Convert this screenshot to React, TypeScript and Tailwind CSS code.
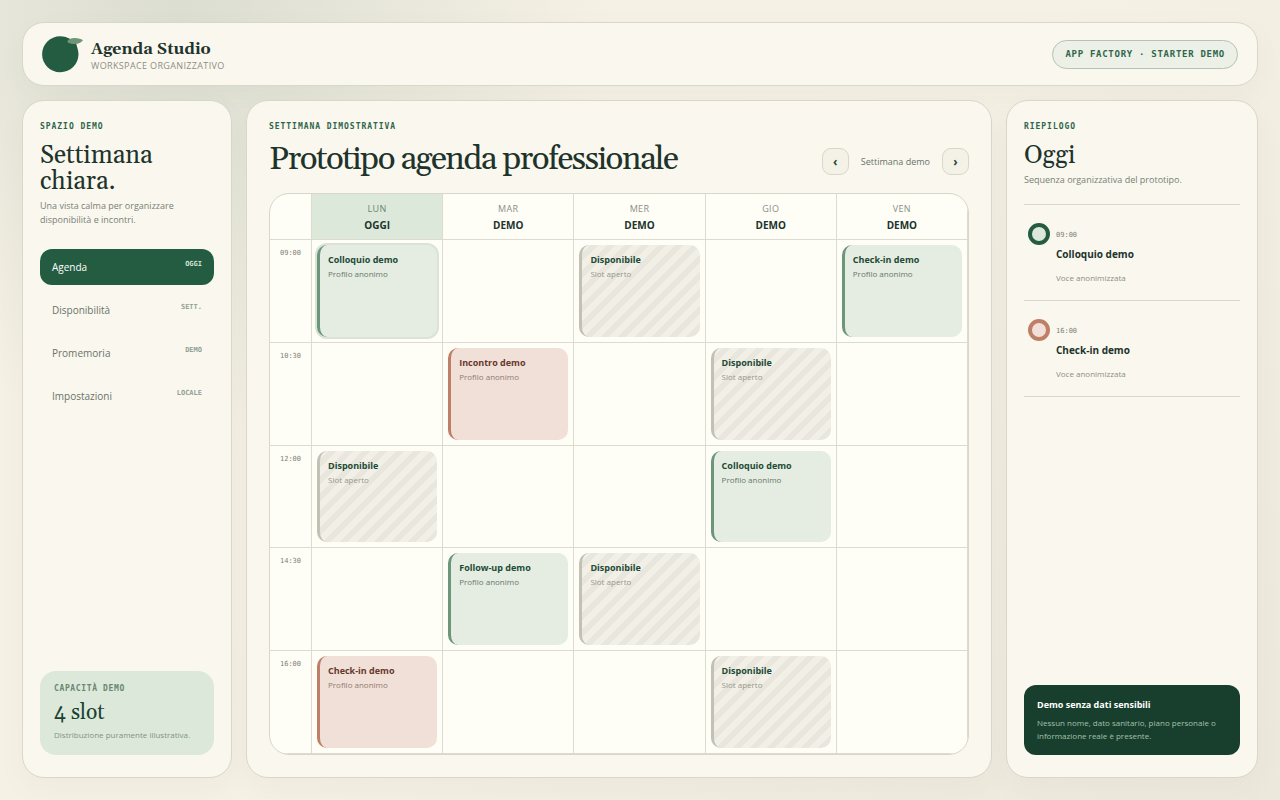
import { useState } from "react";
import clsx from "clsx";

type Tone = "green" | "clay" | "open";

interface Slot {
  id: string;
  day: number;
  time: string;
  title: string;
  detail: string;
  tone: Tone;
}

const days = [
  { name: "Lun", label: "OGGI", today: true },
  { name: "Mar", label: "DEMO", today: false },
  { name: "Mer", label: "DEMO", today: false },
  { name: "Gio", label: "DEMO", today: false },
  { name: "Ven", label: "DEMO", today: false },
];

const times = ["09:00", "10:30", "12:00", "14:30", "16:00"];

const slots: Slot[] = [
  { id: "s1", day: 0, time: "09:00", title: "Colloquio demo", detail: "Profilo anonimo", tone: "green" },
  { id: "s2", day: 2, time: "09:00", title: "Disponibile", detail: "Slot aperto", tone: "open" },
  { id: "s3", day: 4, time: "09:00", title: "Check-in demo", detail: "Profilo anonimo", tone: "green" },
  { id: "s4", day: 1, time: "10:30", title: "Incontro demo", detail: "Profilo anonimo", tone: "clay" },
  { id: "s5", day: 3, time: "10:30", title: "Disponibile", detail: "Slot aperto", tone: "open" },
  { id: "s6", day: 0, time: "12:00", title: "Disponibile", detail: "Slot aperto", tone: "open" },
  { id: "s7", day: 3, time: "12:00", title: "Colloquio demo", detail: "Profilo anonimo", tone: "green" },
  { id: "s8", day: 1, time: "14:30", title: "Follow-up demo", detail: "Profilo anonimo", tone: "green" },
  { id: "s9", day: 2, time: "14:30", title: "Disponibile", detail: "Slot aperto", tone: "open" },
  { id: "s10", day: 0, time: "16:00", title: "Check-in demo", detail: "Profilo anonimo", tone: "clay" },
  { id: "s11", day: 3, time: "16:00", title: "Disponibile", detail: "Slot aperto", tone: "open" },
];

const navItems = [
  { label: "Agenda", badge: "OGGI" },
  { label: "Disponibilità", badge: "SETT." },
  { label: "Promemoria", badge: "DEMO" },
  { label: "Impostazioni", badge: "LOCALE" },
];

const todayItems = [
  { time: "09:00", title: "Colloquio demo", ring: "border-[#245c42] bg-[#dce8da]" },
  { time: "16:00", title: "Check-in demo", ring: "border-[#bf7f66] bg-[#f1e0d9]" },
];

const slotTones: Record<Tone, string> = {
  green: "border-[#6b9679] bg-[#e5ece1] text-[#1c4a36]",
  clay: "border-[#bf7f66] bg-[#f0e0d8] text-[#68392b]",
  open: "border-[#c3c1b4] bg-[repeating-linear-gradient(135deg,#f2efe6_0_6px,#e9e6dd_6px_12px)] text-[#1c4a36]",
};

const detailTones: Record<Tone, string> = {
  green: "text-[#66796b]",
  clay: "text-[#927a70]",
  open: "text-[#96978d]",
};

const serif = "font-['Gelasio',Georgia,serif]";
const mono = "font-['DejaVu_Sans_Mono',monospace]";
const panel = "rounded-[22px] border border-[#d9d7c9] bg-[#faf7ee] shadow-[0_10px_30px_rgba(60,70,50,0.04)]";
const arrow =
  "size-[27px] rounded-[9px] border border-[#d9d7c9] bg-[#f4f1e6] text-[12px] leading-[20px] font-bold text-[#1c4a36]";

const Eyebrow = ({ children }: { children: string }) => (
  <p className={clsx(mono, "text-[8px] leading-[8px] font-bold tracking-[0.12em] text-[#2f664b]")}>{children}</p>
);

const Logo = () => (
  <svg viewBox="0 0 42 37" className="h-[37px] w-[42px] shrink-0" aria-hidden="true">
    <path
      d="M18.2 0.2C22 0.2 25.5 1.2 28.4 3.1L34 6C34.2 9 36.7 14.4 36.5 18.6C36.2 28.6 28.6 36.3 18.2 36.3C8.2 36.3 0.1 28.3 0.1 18.3C0.1 8.3 8.2 0.2 18.2 0.2Z"
      fill="#245c42"
    />
    <path
      d="M25.3 5.9C26.2 3.2 29 2 33 2.1C36.5 2.2 39 3 41 4.2C39.3 6.6 36.5 7.9 32.5 7.9C29.5 7.9 27 7.3 25.3 5.9Z"
      fill="#6f9579"
    />
  </svg>
);

const SlotCard = ({ slot, selected, onSelect }: { slot: Slot; selected: boolean; onSelect: () => void }) => (
  <button
    type="button"
    onClick={onSelect}
    className={clsx(
      "flex w-full flex-col items-start justify-start rounded-[10px] border-l-[3px] px-2 py-2 text-left",
      slotTones[slot.tone],
      selected && "ring-2 ring-[#dbe3d9]"
    )}
  >
    <strong className="text-[9px] leading-[13px] font-bold">{slot.title}</strong>
    <span className={clsx("mt-[2px] text-[8px] leading-[12px]", detailTones[slot.tone])}>{slot.detail}</span>
  </button>
);

const App = () => {
  const [active, setActive] = useState("Agenda");
  const [selectedSlot, setSelectedSlot] = useState("s1");

  return (
    <div className="flex min-h-screen flex-col gap-3.5 bg-[radial-gradient(circle_at_14%_0%,rgba(36,92,66,0.13),transparent_32%),linear-gradient(135deg,#f7f1e6,#f5f1e5_50%,#ede8dc)] p-[22px] font-['Open_Sans','Noto_Sans',sans-serif] text-[#20332b]">
      <header className={clsx(panel, "flex h-16 items-center justify-between px-[19px]")}>
        <div className="flex items-center gap-[7px]">
          <Logo />
          <div className="pt-[2px]">
            <strong className={clsx(serif, "block text-[16px] leading-[22px] font-bold")}>Agenda Studio</strong>
            <span className="block text-[9px] leading-[12px] tracking-[0.04em] text-[#8b8f86] uppercase">
              Workspace organizzativo
            </span>
          </div>
        </div>
        <span
          className={clsx(
            mono,
            "rounded-full border border-[#b3c3b5] bg-[#edf0e7] px-3 py-2 text-[9px] leading-[11px] font-bold tracking-[0.08em] text-[#2f664b]"
          )}
        >
          APP FACTORY · STARTER DEMO
        </span>
      </header>

      <div className="grid flex-1 gap-3.5 lg:grid-cols-[210px_minmax(0,1fr)_252px]">
        <aside className={clsx(panel, "flex flex-col px-[17px] py-[22px]")}>
          <Eyebrow>SPAZIO DEMO</Eyebrow>
          <h2 className={clsx(serif, "mt-3 text-[25px] leading-[26px]")}>Settimana chiara.</h2>
          <p className="mt-1 text-[9px] leading-[14px] text-[#787f76]">
            Una vista calma per organizzare disponibilità e incontri.
          </p>

          <nav className="mt-[22px] flex flex-col gap-[7px]">
            {navItems.map((item) => (
              <button
                key={item.label}
                type="button"
                onClick={() => setActive(item.label)}
                className={clsx(
                  "flex h-9 items-start justify-between rounded-xl px-3 py-[11px]",
                  active === item.label ? "bg-[#245c42] text-white" : "text-[#68736a]"
                )}
              >
                <span className="text-[10px] leading-[14px]">{item.label}</span>
                <span
                  className={clsx(
                    mono,
                    "text-[7px] leading-[8px] font-bold",
                    active === item.label ? "text-[#d3e0d5]" : "text-[#94a195]"
                  )}
                >
                  {item.badge}
                </span>
              </button>
            ))}
          </nav>

          <div className="mt-auto rounded-2xl bg-[#dce8da] p-3.5">
            <p className={clsx(mono, "text-[8px] leading-[8px] font-bold tracking-[0.08em] text-[#6a8673]")}>
              CAPACITÀ DEMO
            </p>
            <strong className={clsx(serif, "mt-2 block text-[21px] leading-[24px] font-normal text-[#1a4230]")}>
              4 slot
            </strong>
            <p className="mt-1 text-[8px] leading-[12px] text-[#7f9584]">Distribuzione puramente illustrativa.</p>
          </div>
        </aside>

        <main className={clsx(panel, "flex flex-col p-[22px]")}>
          <Eyebrow>SETTIMANA DIMOSTRATIVA</Eyebrow>
          <div className="mt-3 flex items-end justify-between">
            <h1 className={clsx(serif, "text-[33px] leading-[32px] tracking-[-0.045em]")}>
              Prototipo agenda professionale
            </h1>
            <div className="flex items-center gap-3">
              <button type="button" aria-label="Settimana precedente" className={arrow}>
                ‹
              </button>
              <span className="text-[9px] leading-[14px] text-[#68736a]">Settimana demo</span>
              <button type="button" aria-label="Settimana successiva" className={arrow}>
                ›
              </button>
            </div>
          </div>

          <table className="mt-[18px] grid flex-1 grid-cols-[42px_repeat(5,minmax(0,1fr))] grid-rows-[46px_repeat(5,minmax(72px,1fr))] overflow-hidden rounded-[20px] border border-[#d9d7c9] bg-[#fefdf6]">
            <thead className="contents">
              <tr className="contents">
                <td className="border-r border-b border-[#dddbd0]" />
                {days.map((day) => (
                  <th
                    key={day.name}
                    scope="col"
                    className={clsx(
                      "border-r border-b border-[#dddbd0] pt-[9px] text-center font-normal",
                      day.today && "bg-[#dce8da]"
                    )}
                  >
                    <span
                      className={clsx(
                        "block text-[9px] leading-[12px] tracking-[0.04em] uppercase",
                        day.today ? "text-[#6a8673]" : "text-[#8b8f86]"
                      )}
                    >
                      {day.name}
                    </span>
                    <strong className="mt-[3px] block text-[10px] leading-[14px] font-bold">{day.label}</strong>
                  </th>
                ))}
              </tr>
            </thead>
            <tbody className="contents">
              {times.map((time) => (
                <tr key={time} className="contents">
                  <th
                    scope="row"
                    className={clsx(
                      mono,
                      "border-r border-b border-[#dddbd0] pt-[9px] text-center text-[7px] leading-[8px] font-normal text-[#7d8279]"
                    )}
                  >
                    {time}
                  </th>
                  {days.map((day, index) => {
                    const slot = slots.find((s) => s.day === index && s.time === time);
                    return (
                      <td key={day.name} className="flex border-r border-b border-[#dddbd0] p-[5px]">
                        {slot && (
                          <SlotCard
                            slot={slot}
                            selected={slot.id === selectedSlot}
                            onSelect={() => setSelectedSlot(slot.id)}
                          />
                        )}
                      </td>
                    );
                  })}
                </tr>
              ))}
            </tbody>
          </table>
        </main>

        <aside className={clsx(panel, "flex flex-col px-[17px] py-[22px]")}>
          <Eyebrow>RIEPILOGO</Eyebrow>
          <h2 className={clsx(serif, "mt-3 text-[25px] leading-[26px]")}>Oggi</h2>
          <p className="mt-1 text-[9px] leading-[14px] text-[#787f76]">Sequenza organizzativa del prototipo.</p>

          <ul className="mt-[17px] border-t border-[#d9d7c9]">
            {todayItems.map((item) => (
              <li key={item.time} className="flex gap-1.5 border-b border-[#d9d7c9] pt-[18px] pb-4 pl-1">
                <span className={clsx("size-[22px] shrink-0 rounded-full border-4", item.ring)} />
                <div className="pt-2">
                  <time className={clsx(mono, "block text-[7px] leading-[8px] text-[#7d8279]")}>{item.time}</time>
                  <strong className="mt-2 block text-[10px] leading-[14px] font-bold">{item.title}</strong>
                  <p className="mt-[11px] text-[8px] leading-[12px] text-[#8b8f86]">Voce anonimizzata</p>
                </div>
              </li>
            ))}
          </ul>

          <div className="mt-auto rounded-xl bg-[#183f2d] p-[13px]">
            <strong className="block text-[9px] leading-[14px] font-bold text-white">Demo senza dati sensibili</strong>
            <p className="mt-1 text-[8px] leading-[13px] text-[#a3c0aa]">
              Nessun nome, dato sanitario, piano personale o informazione reale è presente.
            </p>
          </div>
        </aside>
      </div>
    </div>
  );
};

export default App;
